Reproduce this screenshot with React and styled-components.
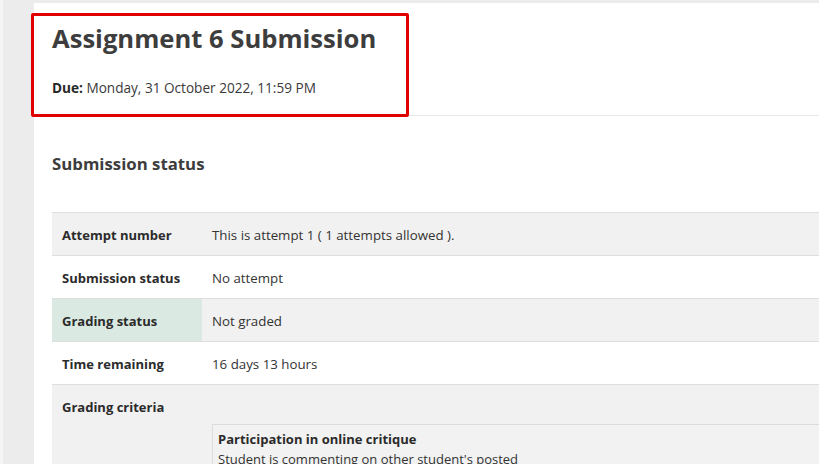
import React from "react";
import styled, { createGlobalStyle } from "styled-components";

const GlobalStyle = createGlobalStyle`
  html, body {
    margin: 0;
    padding: 0;
    background: #ececec;
    overflow: hidden;
  }
  body {
    font-family: "Open Sans", "Noto Sans", "Liberation Sans", sans-serif;
    color: #333333;
  }
`;

const rows = [
  { label: "Attempt number", value: "This is attempt 1 ( 1 attempts allowed ).", shade: true },
  { label: "Submission status", value: "No attempt" },
  { label: "Grading status", value: "Not graded", shade: true, status: true },
  { label: "Time remaining", value: "16 days 13 hours" },
];

const App = () => {
  return (
    <React.Fragment>
      <GlobalStyle />
      <Page>
        <Gutter />
        <Panel>
          <Header>
            <Title>Assignment 6 Submission</Title>
            <DueLine>
              <b>Due:</b> Monday, 31 October 2022, 11:59 PM
            </DueLine>
            <Highlight />
          </Header>
          <Content>
            <SectionTitle>Submission status</SectionTitle>
            <Table>
              <tbody>
                {rows.map((row) => (
                  <Row key={row.label} shade={row.shade}>
                    <Label status={row.status}>{row.label}</Label>
                    <Value>{row.value}</Value>
                  </Row>
                ))}
                <Row shade>
                  <Label>Grading criteria</Label>
                  <Value>
                    <Criterion>
                      <CriterionTitle>Participation in online critique</CriterionTitle>
                      <CriterionText>
                        Student is commenting on other student's posted
                      </CriterionText>
                    </Criterion>
                  </Value>
                </Row>
              </tbody>
            </Table>
          </Content>
        </Panel>
      </Page>
    </React.Fragment>
  );
};

const Page = styled.div`
  display: flex;
  height: 464px;
  overflow: hidden;
`;

const Gutter = styled.div`
  width: 31px;
  flex: none;
  border-left: 3px solid #f5f5f5;
  background: #ececec;
`;

const Panel = styled.div`
  flex: 1;
  margin-top: 3px;
  background: #ffffff;
  min-width: 0;
`;

const Header = styled.div`
  position: relative;
  padding: 20px 18px 18px;
  border-bottom: 1px solid #e8e8e8;
`;

const Title = styled.h2`
  margin: 0;
  font-size: 25.6px;
  line-height: 31px;
  font-weight: 700;
  color: #3d3d3d;
`;

const DueLine = styled.div`
  margin-top: 24px;
  font-size: 13.6px;
  line-height: 19px;
  color: #3a3a3a;
  b {
    font-weight: 700;
    color: #262626;
  }
`;

const Highlight = styled.div`
  position: absolute;
  left: -3px;
  top: 10px;
  width: 372px;
  height: 98px;
  border: 3px solid #e00000;
  border-radius: 2px;
  pointer-events: none;
`;

const Content = styled.div`
  padding: 35px 0 0 18px;
`;

const SectionTitle = styled.h3`
  margin: 0 0 36px;
  padding-top: 1px;
  font-size: 16.8px;
  line-height: 24px;
  font-weight: 700;
  color: #3d3d3d;
`;

const Table = styled.table`
  width: 100%;
  border-collapse: collapse;
  font-size: 13.3px;
  line-height: 20px;
`;

const Row = styled.tr`
  background: ${(props) => (props.shade ? "#f1f1f1" : "#ffffff")};
  border-top: 1px solid #dedede;
  vertical-align: top;
`;

const Label = styled.th`
  width: 130px;
  padding: 12px 10px 10px;
  text-align: left;
  font-weight: 700;
  font-size: 13px;
  color: #2b2b2b;
  background: ${(props) => (props.status ? "#dae9e2" : "transparent")};
`;

const Value = styled.td`
  padding: 12px 10px 10px;
  color: #333333;
`;

const Criterion = styled.div`
  margin-top: 27px;
  margin-right: -40px;
  padding: 4px 5px;
  border: 1px solid #dcdcdc;
  background: #f2f2f2;
  font-size: 13px;
`;

const CriterionTitle = styled.div`
  font-weight: 700;
  color: #2b2b2b;
`;

const CriterionText = styled.div`
  color: #333333;
`;

export default App;
